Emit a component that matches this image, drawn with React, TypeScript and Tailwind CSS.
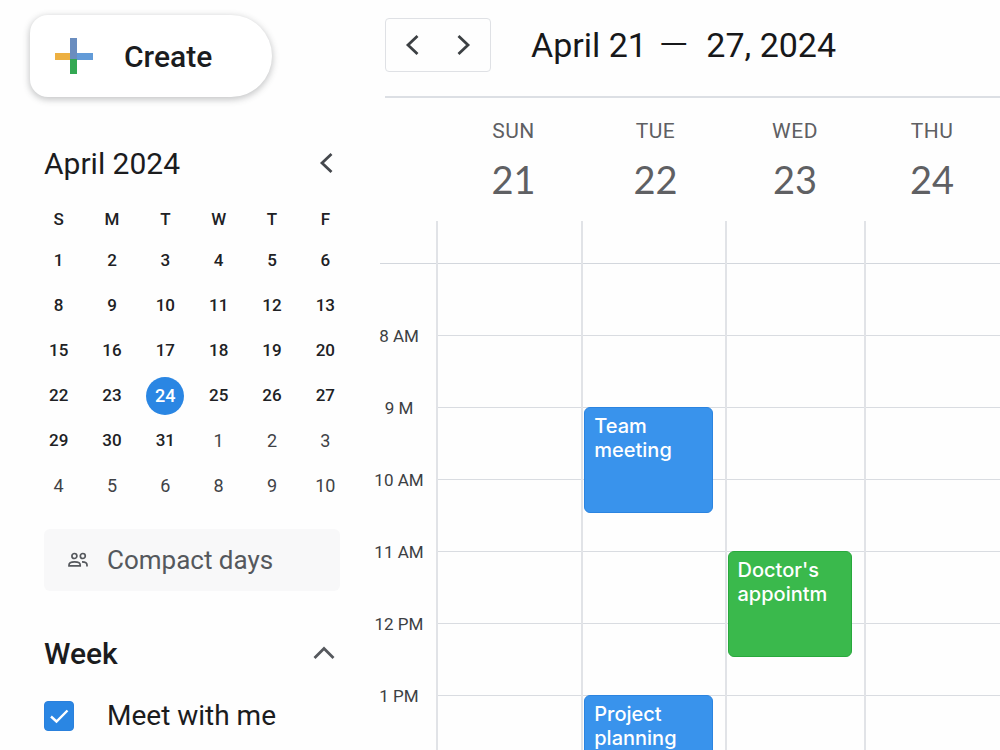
import { useState } from "react";

type CalendarEvent = { title: string; tone: "blue" | "green" };
type Day = { name: string; date: number; events: Record<string, CalendarEvent> };

const hours = ["8 AM", "9 M", "10 AM", "11 AM", "12 PM", "1 PM"];
const slots = ["7", "8", "9", "10", "11", "12", "13"];

const days: Day[] = [
  { name: "SUN", date: 21, events: {} },
  {
    name: "TUE",
    date: 22,
    events: {
      "9": { title: "Team meeting", tone: "blue" },
      "13": { title: "Project planning", tone: "blue" },
    },
  },
  { name: "WED", date: 23, events: { "11": { title: "Doctor's appointm", tone: "green" } } },
  { name: "THU", date: 24, events: {} },
];

const tones = {
  blue: "border-[#2b84e0] bg-[#3993ec]",
  green: "border-[#28a93c] bg-[#3ab94c]",
};

const weekdays = ["S", "M", "T", "W", "T", "F"];
const weeks = [
  [1, 2, 3, 4, 5, 6],
  [8, 9, 10, 11, 12, 13],
  [15, 16, 17, 18, 19, 20],
  [22, 23, 24, 25, 26, 27],
  [29, 30, 31, 1, 2, 3],
  [4, 5, 6, 8, 9, 10],
];

function Chevron({ points, className }: { points: string; className: string }) {
  return (
    <svg viewBox="0 0 24 24" className={className} fill="none" stroke="currentColor" strokeWidth="2.8" aria-hidden="true">
      <polyline points={points} />
    </svg>
  );
}

const LEFT = "17.5 3 8 12 17.5 21";
const RIGHT = "6.5 3 16 12 6.5 21";
const UP = "2.5 17 12 7.5 21.5 17";

function PlusIcon() {
  return (
    <svg viewBox="0 0 38 36" className="h-9 w-[38px]" aria-hidden="true">
      <rect x="0" y="15" width="16" height="7" fill="#edb041" />
      <rect x="22" y="15" width="16" height="7" fill="#629bd8" />
      <rect x="15" y="0" width="7" height="22" fill="#6a8dbf" />
      <rect x="15" y="21" width="7" height="15" fill="#34a853" />
    </svg>
  );
}

function PeopleIcon() {
  return (
    <svg viewBox="0 0 20 16" className="h-4 w-5" fill="none" stroke="currentColor" strokeWidth="1.7" aria-hidden="true">
      <circle cx="6.4" cy="4" r="2.5" />
      <circle cx="14.8" cy="4" r="2.5" />
      <path d="M1 13.8v-.8c0-2 2.600-3.200 5.600-3.200s5.600 1.200 5.600 3.200v.8z" />
      <path d="M14 9.800c3 0 5 1.300 5 3.200v1.600" />
    </svg>
  );
}

function MiniCalendar() {
  return (
    <table className="mr-5 ml-8 w-80 table-fixed text-center text-[17px] font-medium text-[#202124]">
      <thead>
        <tr className="h-[37px]">
          {weekdays.map((d, i) => (
            <th key={i} scope="col" className="p-0 font-medium">
              {d}
            </th>
          ))}
        </tr>
      </thead>
      <tbody>
        {weeks.map((week, w) => (
          <tr key={w} className="h-[45px]">
            {week.map((n, i) => {
              const selected = w === 3 && n === 24;
              const outside = w > 3 && n < 11;
              return (
                <td key={i} className="p-0">
                  <button
                    type="button"
                    className={
                      selected
                        ? "size-[38px] rounded-full bg-[#2a86e3] text-[18px] text-white"
                        : outside
                          ? "size-[38px] rounded-full text-[18px] font-normal text-[#3f4246]"
                          : "size-[38px] rounded-full"
                    }
                  >
                    {n}
                  </button>
                </td>
              );
            })}
          </tr>
        ))}
      </tbody>
    </table>
  );
}

function Sidebar() {
  const [checked, setChecked] = useState(true);
  return (
    <aside className="w-[372px] shrink-0 pt-[15px]">
      <button
        type="button"
        className="ml-[30px] flex h-[82px] w-[242px] items-center gap-[31px] rounded-l-[18px] rounded-r-[41px] bg-white pl-[25px] text-[30px] font-medium text-[#1b1c1e] shadow-[0_2px_6px_1px_rgba(60,64,67,0.28)]"
      >
        <PlusIcon />
        Create
      </button>

      <div className="mt-11 mr-[34px] ml-11 flex h-11 items-center justify-between">
        <h2 className="text-[30px] text-[#1b1c1e]">April 2024</h2>
        <button type="button" aria-label="Previous month" className="text-[#45484d]">
          <Chevron points={LEFT} className="size-6" />
        </button>
      </div>

      <div className="mt-4">
        <MiniCalendar />
      </div>

      <button
        type="button"
        className="mt-[21px] ml-11 flex h-[62px] w-[296px] items-center gap-[19px] rounded-md bg-[#f8f8f9] pl-6 text-[26px] text-[#55585d]"
      >
        <PeopleIcon />
        Compact days
      </button>

      <div className="mt-10 mr-9 ml-11 flex h-11 items-center justify-between">
        <h2 className="text-[30px] font-medium text-[#1b1c1e]">Week</h2>
        <button type="button" aria-label="Collapse week" className="text-[#55585d]">
          <Chevron points={UP} className="size-6" />
        </button>
      </div>

      <label className="mt-[21px] ml-11 flex h-10 items-center gap-[33px] text-[28px] text-[#1b1c1e]">
        <span className="relative flex size-[30px]">
          <input
            type="checkbox"
            checked={checked}
            onChange={(e) => setChecked(e.target.checked)}
            className="size-[30px] appearance-none rounded border border-[#2a80dc] bg-white checked:bg-[#2a86e3]"
          />
          {checked && (
            <svg viewBox="0 0 30 30" className="pointer-events-none absolute inset-0 size-[30px]" fill="none" stroke="white" strokeWidth="2.4" aria-hidden="true">
              <polyline points="7 15.5 12.5 20.5 23.5 9.5" />
            </svg>
          )}
        </span>
        Meet with me
      </label>
    </aside>
  );
}

function WeekView() {
  return (
    <main className="min-w-0 flex-1">
      <header className="ml-[13px] flex h-[98px] items-start border-b-2 border-[#dcdfe4] pt-[18px]">
        <div className="flex h-[54px] w-[106px] items-center justify-between rounded border border-[#dfe1e5] px-[14px] text-[#3c4043]">
          <button type="button" aria-label="Previous week">
            <Chevron points={LEFT} className="size-6" />
          </button>
          <button type="button" aria-label="Next week">
            <Chevron points={RIGHT} className="size-6" />
          </button>
        </div>
        <h1 className="ml-10 flex h-[54px] items-center text-[34px] whitespace-nowrap text-[#17181a]">
          <span>April 21</span>
          <span className="mr-[18px] ml-3 text-[38px] leading-none font-light">—</span>
          <span>27, 2024</span>
        </h1>
      </header>

      <div className="grid h-[123px] grid-cols-[70px_143fr_141fr_138fr_136fr] text-center">
        <span />
        {days.map((day) => (
          <div key={day.name} className="pt-[19px] text-[#5f6063]">
            <div className="text-[21px] leading-7 tracking-wide">{day.name}</div>
            <div className="mt-[10px] font-['Lato',sans-serif] text-[38px] leading-[48px]">{day.date}</div>
          </div>
        ))}
      </div>

      <div className="grid grid-cols-[64px_145fr_143fr_139fr_136fr]">
        <div>
          <div className="ml-2 h-[43px] border-b border-[#d3d7dd]" />
          <div className="pt-[37px] pr-[10px]">
            {hours.map((h) => (
              <div key={h} className="flex h-[72px] items-center justify-center text-[17px] text-[#3c4043]">
                {h}
              </div>
            ))}
          </div>
        </div>
        {days.map((day) => (
          <div key={day.name} className="border-l-2 border-[#e1e3e7]">
            <div className="h-[43px] border-b border-[#d3d7dd]" />
            {slots.map((slot) => {
              const event = day.events[slot];
              return (
                <div key={slot} className="relative h-[72px] border-b border-[#d9dce1]">
                  {event && (
                    <a
                      href="#event"
                      className={`absolute -top-px right-3 left-px z-10 h-[106px] rounded-md border px-[9px] py-[6px] font-['Inter',sans-serif] text-[20px] leading-[24px] font-medium text-white ${tones[event.tone]}`}
                    >
                      {event.title}
                    </a>
                  )}
                </div>
              );
            })}
          </div>
        ))}
      </div>
    </main>
  );
}

export default function App() {
  return (
    <div className="flex h-screen overflow-hidden bg-[#fefefe] font-[Roboto,sans-serif]">
      <Sidebar />
      <WeekView />
    </div>
  );
}
